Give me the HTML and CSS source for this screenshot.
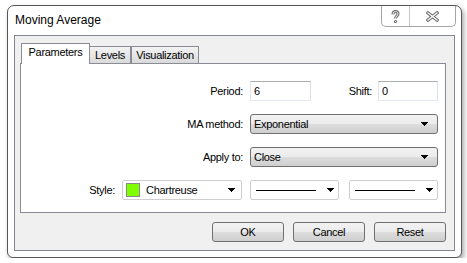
FILE: index.html
```html
<!doctype html>
<html>
  <head>
    <meta charset="UTF-8" />
    <title>Moving Average</title>
    <link rel="stylesheet" href="styles.css">
  </head>
  <body>
    <div class="window">
      <div class="titlebar">
        <span class="title">Moving Average</span>
        <div class="caption">
          <span class="cap help">
            <svg width="9" height="14" viewBox="0 0 9 14">
              <path d="M2 4.5C2 2.3 3.3 1.5 4.5 1.5C6 1.5 7 2.5 7 3.9C7 5.7 4.5 6 4.5 8.6" fill="none" stroke="#6a6a6a" stroke-width="3"/>
              <path d="M2 4.5C2 2.3 3.3 1.5 4.5 1.5C6 1.5 7 2.5 7 3.9C7 5.7 4.5 6 4.5 8.6" fill="none" stroke="#fff" stroke-width="1"/>
              <circle cx="4.5" cy="11.5" r="1.6" fill="#6a6a6a"/>
              <circle cx="4.5" cy="11.5" r="0.6" fill="#fff"/>
            </svg>
          </span>
          <span class="cap close">
            <svg width="13" height="11" viewBox="0 0 13 11">
              <path d="M2 2L11 9M11 2L2 9" stroke="#6a6a6a" stroke-width="3.4" stroke-linecap="square"/>
              <path d="M2 2L11 9M11 2L2 9" stroke="#fff" stroke-width="1.3" stroke-linecap="square"/>
            </svg>
          </span>
        </div>
      </div>

      <div class="client">
        <div class="tabs">
          <span class="tab active">Parameters</span>
          <span class="tab levels">Levels</span>
          <span class="tab visual">Visualization</span>
        </div>

        <div class="panel">
          <!-- row 1 -->
          <span class="lbl">Period:</span>
          <div class="field">
            <div class="edit period">6</div>
            <span class="lbl shift">Shift:</span>
            <div class="edit shift-box">0</div>
          </div>

          <!-- row 2 -->
          <span class="lbl">MA method:</span>
          <div class="combo">
            <span>Exponential</span>
            <svg class="arrow" width="7" height="4" viewBox="0 0 7 4"><path d="M0 0h7v1h-1v1h-1v1h-1v1h-1v-1h-1v-1h-1v-1h-1z" fill="#000"/></svg>
          </div>

          <!-- row 3 -->
          <span class="lbl">Apply to:</span>
          <div class="combo">
            <span>Close</span>
            <svg class="arrow" width="7" height="4" viewBox="0 0 7 4"><path d="M0 0h7v1h-1v1h-1v1h-1v1h-1v-1h-1v-1h-1v-1h-1z" fill="#000"/></svg>
          </div>

          <!-- row 4 -->
          <div class="style-cell">
            <span class="lbl">Style:</span>
            <div class="pick color-pick">
              <span class="swatch"></span>
              <span class="pick-text">Chartreuse</span>
              <svg class="arrow" width="7" height="4" viewBox="0 0 7 4"><path d="M0 0h7v1h-1v1h-1v1h-1v1h-1v-1h-1v-1h-1v-1h-1z" fill="#000"/></svg>
            </div>
          </div>
          <div class="field lines">
            <div class="pick line-pick">
              <span class="line"></span>
              <svg class="arrow" width="7" height="4" viewBox="0 0 7 4"><path d="M0 0h7v1h-1v1h-1v1h-1v1h-1v-1h-1v-1h-1v-1h-1z" fill="#000"/></svg>
            </div>
            <div class="pick line-pick">
              <span class="line"></span>
              <svg class="arrow" width="7" height="4" viewBox="0 0 7 4"><path d="M0 0h7v1h-1v1h-1v1h-1v1h-1v-1h-1v-1h-1v-1h-1z" fill="#000"/></svg>
            </div>
          </div>
        </div>

        <div class="buttons">
          <span class="btn">OK</span>
          <span class="btn">Cancel</span>
          <span class="btn">Reset</span>
        </div>
      </div>
    </div>
  </body>
</html>
```

FILE: styles.css
```css
* {
  box-sizing: border-box;
}

body {
  margin: 0;
  padding: 5px 0 0 7px;
  background: #fff;
  font-family: "Liberation Sans", Arial, sans-serif;
  font-size: 11px;
  line-height: 13px;
  letter-spacing: -0.3px;
  color: #000;
}

/* --- window frame --- */
.window {
  width: 455px;
  height: 253px;
  border: 1px solid #575757;
  border-radius: 7px 7px 6px 6px;
  background: #fff;
  box-shadow: 2px 3px 5px rgba(0, 0, 0, 0.35);
  display: flex;
  flex-direction: column;
}

.titlebar {
  height: 29px;
  display: flex;
  justify-content: space-between;
  align-items: flex-start;
  padding: 0 5px 0 7px;
}

.title {
  font-size: 12px;
  line-height: 15px;
  letter-spacing: 0;
  padding-top: 7px;
}

.caption {
  display: flex;
  height: 21px;
  border: 1px solid #a4a4a4;
  border-top: 0;
  border-radius: 0 0 5px 5px;
}

.cap {
  display: flex;
  align-items: center;
  justify-content: center;
}

.cap.help {
  width: 28px;
  border-right: 1px solid #c8c8c8;
  padding-top: 1px;
}

.cap.close {
  width: 45px;
}

/* --- client area --- */
.client {
  margin: 0 6px;
  height: 216px;
  border: 1px solid #828790;
  background: #f0f0f0;
  padding: 7px 8px 0 5px;
}

.tabs {
  display: flex;
  align-items: flex-end;
  height: 20px;
  padding-left: 1px;
}

.tab {
  height: 17px;
  border: 1px solid #898c95;
  border-bottom: 0;
  padding-top: 2px;
  text-align: center;
  background: linear-gradient(#f3f3f3, #dadada);
}

.tab.active {
  position: relative; /* covers the panel's top line */
  z-index: 1;
  width: 69px;
  height: 21px;
  margin-bottom: -1px;
  background: #fff;
}

.tab.levels {
  width: 42px;
  margin-left: -1px;
}

.tab.visual {
  width: 68px;
}

.panel {
  height: 150px;
  border: 1px solid #898c95;
  background: #fff;
  padding-top: 17px;
  display: grid;
  grid-template-columns: 222px 188px;
  grid-template-rows: repeat(4, 20px);
  column-gap: 7px;
  row-gap: 13px;
  align-content: start;
}

.lbl {
  align-self: center;
  text-align: right;
}

.field {
  display: flex;
  align-items: center;
}

.lbl.shift {
  margin-left: auto;
  margin-right: 6px;
}

.edit {
  height: 20px;
  background: #fff;
  border: 1px solid;
  border-color: #abadb3 #dbdfe6 #e3e9ef #e2e3ea;
  padding: 3px 0 0 3px;
}

.edit.period {
  width: 61px;
}

.edit.shift-box {
  width: 60px;
}

.combo {
  height: 20px;
  display: flex;
  align-items: center;
  justify-content: space-between;
  padding: 0 9px 0 3px;
  border: 1px solid #707070;
  border-radius: 3px;
  background: linear-gradient(#f2f2f2 0%, #ebebeb 50%, #dddddd 50%, #cfcfcf 100%);
}

.arrow {
  display: block;
  flex-shrink: 0;
}

.style-cell {
  display: flex;
  align-items: center;
  justify-content: flex-end;
  gap: 7px;
  padding-right: 1px;
}

.pick {
  height: 20px;
  display: flex;
  align-items: center;
  background: #fff;
  border: 1px solid #cfcfcf;
  border-radius: 2px;
}

.color-pick {
  width: 120px;
  padding: 0 6px 0 3px;
}

.swatch {
  width: 14px;
  height: 14px;
  background: #7fff00;
  border: 1px solid #8a8a8a;
  flex-shrink: 0;
}

.pick-text {
  flex: 1;
  padding-left: 6px;
}

.lines {
  justify-content: space-between;
}

.line-pick {
  width: 89px;
  justify-content: space-between;
  padding: 0 4px 0 5px;
}

.line {
  width: 60px;
  height: 1px;
  background: #000;
}

/* --- dialog buttons --- */
.buttons {
  display: flex;
  justify-content: flex-end;
  gap: 9px;
  margin-top: 9px;
}

.btn {
  width: 72px;
  height: 20px;
  display: flex;
  align-items: center;
  justify-content: center;
  border: 1px solid #707070;
  border-radius: 3px;
  background: linear-gradient(#f2f2f2 0%, #ebebeb 50%, #dddddd 50%, #cfcfcf 100%);
}
```
